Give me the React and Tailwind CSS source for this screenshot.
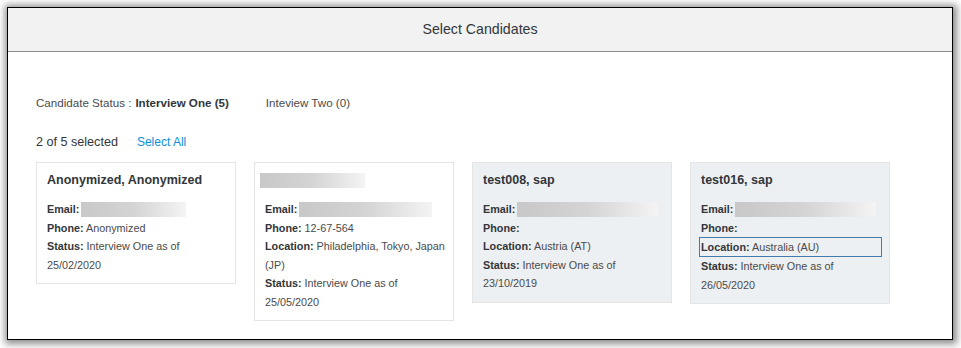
import React from "react";

const candidates = [
  {
    name: "Anonymized, Anonymized",
    emailW: "w-[105px]",
    rows: [
      ["Phone:", "Anonymized"],
      ["Status:", "Interview One as of 25/02/2020"],
    ],
    selected: false,
  },
  {
    name: null,
    emailW: "w-[133px]",
    rows: [
      ["Phone:", "12-67-564"],
      ["Location:", "Philadelphia, Tokyo, Japan (JP)"],
      ["Status:", "Interview One as of 25/05/2020"],
    ],
    selected: false,
  },
  {
    name: "test008, sap",
    emailW: "w-[141px]",
    rows: [
      ["Phone:", ""],
      ["Location:", "Austria (AT)"],
      ["Status:", "Interview One as of 23/10/2019"],
    ],
    selected: true,
  },
  {
    name: "test016, sap",
    emailW: "w-[141px]",
    rows: [
      ["Phone:", ""],
      ["Location:", "Australia (AU)", true],
      ["Status:", "Interview One as of 26/05/2020"],
    ],
    selected: true,
  },
];

function Blur({ className }) {
  return (
    <span
      className={`inline-block align-middle bg-gradient-to-r from-[#c8c8c8] via-[#d4d4d4] to-[#f4f4f4] ${className}`}
    />
  );
}

function Card({ c }) {
  return (
    <div
      className={`w-[200px] self-start border border-[#e5e5e5] pl-[10px] pr-[10px] pt-[7px] pb-[9px] ${
        c.selected ? "bg-[#edf0f3]" : "bg-white"
      }`}
    >
      {c.name ? (
        <div className="text-[12.5px] font-bold text-[#32363a] leading-[20px] h-[20px]">{c.name}</div>
      ) : (
        <div className="h-[20px] -ml-[5px] flex items-center">
          <Blur className="w-[105px] h-[15px]" />
        </div>
      )}
      <div className="mt-[10px] -mr-[6px] text-[10.8px] leading-[18.5px] text-[#32363a]">
        <div className="flex items-center">
          <span className="font-bold mr-[2px]">Email:</span>
          <Blur className={`${c.emailW} h-[15px]`} />
        </div>
        {c.rows.map(([label, value, focus], i) => (
          <div
            key={i}
            className={
              focus
                ? "-ml-[2px] mr-[3px] pl-[1px] border border-[#427cac] leading-[18px]"
                : ""
            }
          >
            <span className="font-bold">{label}</span>
            {value ? <span className="text-[#4a4a4a]"> {value}</span> : null}
          </div>
        ))}
      </div>
    </div>
  );
}

export default function App() {
  return (
    <div
      className="w-[961px] h-[348px] bg-white pt-[7px] pl-[7px] overflow-hidden"
      style={{ fontFamily: '"Liberation Sans", Arial, sans-serif' }}
    >
      <div className="w-[946px] h-[333px] border border-black bg-white shadow-[1px_1px_7px_3px_rgba(0,0,0,0.45)] flex flex-col">
        <div className="h-[44px] bg-[#f2f2f2] border-b border-[#8c8c8c] flex items-center justify-center">
          <span className="text-[14.2px] text-[#32363a]">Select Candidates</span>
        </div>

        <div className="pl-[28px] pt-[43px]">
          <div className="flex items-center text-[11.6px] leading-[16px] text-[#32363a]">
            <span className="text-[#4a4a4a]">Candidate Status :</span>
            <span className="font-bold ml-[4px]">Interview One (5)</span>
            <span className="ml-[37px] text-[#4a4a4a]">Inteview Two (0)</span>
          </div>

          <div className="mt-[22px] flex items-center leading-[18px]">
            <span className="text-[12.6px] text-[#32363a]">2 of 5 selected</span>
            <span className="ml-[19px] text-[12px] text-[#0a8fdb]">Select All</span>
          </div>

          <div className="mt-[11px] flex gap-[18px]">
            {candidates.map((c, i) => (
              <Card key={i} c={c} />
            ))}
          </div>
        </div>
      </div>
    </div>
  );
}
